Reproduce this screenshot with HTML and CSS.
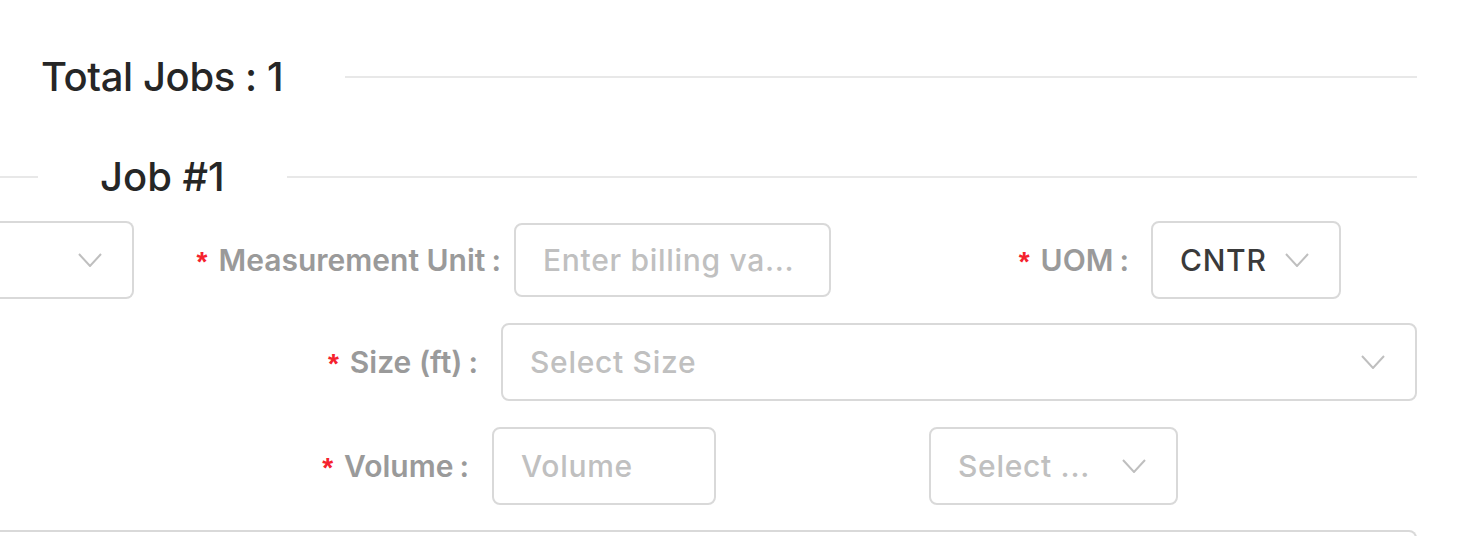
FILE: index.html
```html
<!DOCTYPE html>
<html lang="en">
<head>
<meta charset="utf-8">
<title>Jobs</title>
<link rel="stylesheet" href="styles.css">
</head>
<body>
<div class="page">
  <div class="total">
    <h2 class="total-title">Total Jobs : 1</h2>
    <div class="rule"></div>
  </div>

  <div class="job-divider">
    <div class="rule rule-left"></div>
    <h3 class="job-title">Job #1</h3>
    <div class="rule"></div>
  </div>

  <div class="row row-1">
    <div class="select select-cut">
      <span class="sel-text"></span>
      <svg class="chev" viewBox="0 0 24 14"><path d="M1 1 L12 13 L23 1" /></svg>
    </div>
    <label class="label label-mu"><span class="req">*</span>Measurement Unit<span class="colon">:</span></label>
    <div class="input input-mu"><span class="ph">Enter billing va...</span></div>
    <label class="label label-uom"><span class="req">*</span>UOM<span class="colon">:</span></label>
    <div class="select select-uom">
      <span class="sel-text value">CNTR</span>
      <svg class="chev" viewBox="0 0 24 14"><path d="M1 1 L12 13 L23 1" /></svg>
    </div>
  </div>

  <div class="row row-2">
    <label class="label label-size"><span class="req">*</span>Size (ft)<span class="colon">:</span></label>
    <div class="select select-size">
      <span class="sel-text ph">Select Size</span>
      <svg class="chev" viewBox="0 0 24 14"><path d="M1 1 L12 13 L23 1" /></svg>
    </div>
  </div>

  <div class="row row-3">
    <label class="label label-vol"><span class="req">*</span>Volume<span class="colon">:</span></label>
    <div class="input input-vol"><span class="ph">Volume</span></div>
    <div class="select select-unit">
      <span class="sel-text ph">Select ...</span>
      <svg class="chev" viewBox="0 0 24 14"><path d="M1 1 L12 13 L23 1" /></svg>
    </div>
  </div>

  <div class="next-card"></div>
</div>
</body>
</html>
```

FILE: styles.css
```css
* { box-sizing: border-box; }

html, body {
  margin: 0;
  padding: 0;
  background: #ffffff;
}

body {
  font-family: Inter, "Noto Sans", "Liberation Sans", sans-serif;
  color: #262626;
  overflow: hidden;
}

.page {
  width: 1460px;
  padding-right: 43px;
}

.rule {
  flex: 1;
  height: 0;
  border-top: 2px solid #e8e8e8;
}

.total {
  display: flex;
  align-items: center;
  height: 56px;
  margin-top: 49px;
  padding-left: 41px;
}

.total-title {
  margin: 0 62px 0 0;
  font-size: 40px;
  font-weight: 500;
  line-height: 56px;
  color: #262626;
  letter-spacing: -0.4px;
}

.job-divider {
  display: flex;
  align-items: center;
  height: 56px;
  margin-top: 44px;
}

.rule-left {
  flex: 0 0 38px;
}

.job-title {
  margin: 0 62px;
  font-size: 40px;
  font-weight: 500;
  line-height: 56px;
  color: #262626;
  letter-spacing: 0;
}

.row {
  display: flex;
  align-items: center;
  height: 78px;
}

.row-1 { margin-top: 16px; }
.row-2 { margin-top: 24px; }
.row-3 { margin-top: 26px; }

.label {
  flex: 0 0 auto;
  text-align: right;
  font-size: 30px;
  font-weight: 600;
  color: #9a9a9a;
  white-space: nowrap;
}

.req {
  color: #f5222d;
  font-family: "Liberation Sans", sans-serif;
  font-weight: 700;
  margin-right: 11px;
  font-size: 28px;
}

.colon {
  margin-left: 6px;
}

.label-mu { width: 380px; padding-right: 13px; }
.label-uom { width: 320px; padding-right: 22px; }
.label-size { width: 501px; padding-right: 23px; }
.label-vol { width: 492px; padding-right: 23px; }

.input,
.select {
  display: flex;
  align-items: center;
  border: 2px solid #d9d9d9;
  border-radius: 8px;
  background: #fff;
  font-size: 30px;
  font-weight: 500;
  letter-spacing: 0.7px;
  padding-left: 27px;
}

.ph {
  color: #c0c0c0;
  white-space: nowrap;
}

.input-mu { width: 317px; height: 74px; }
.input-vol { width: 224px; height: 78px; }

.select {
  height: 78px;
  padding-right: 30px;
}

.sel-text {
  flex: 1;
  white-space: nowrap;
  overflow: hidden;
}

.value { color: #3a3a3a; }

.chev {
  flex: 0 0 24px;
  width: 24px;
  height: 14px;
  fill: none;
  stroke: #bfbfbf;
  stroke-width: 2;
}

.select-cut {
  width: 134px;
  border-left: none;
  border-radius: 0 8px 8px 0;
}

.select-uom { width: 190px; }
.select-size { width: 916px; }
.select-unit { width: 249px; margin-left: 213px; }

.next-card {
  margin-top: 25px;
  height: 40px;
  border: 2px solid #d9d9d9;
  border-left: none;
  border-radius: 0 8px 0 0;
}
```
